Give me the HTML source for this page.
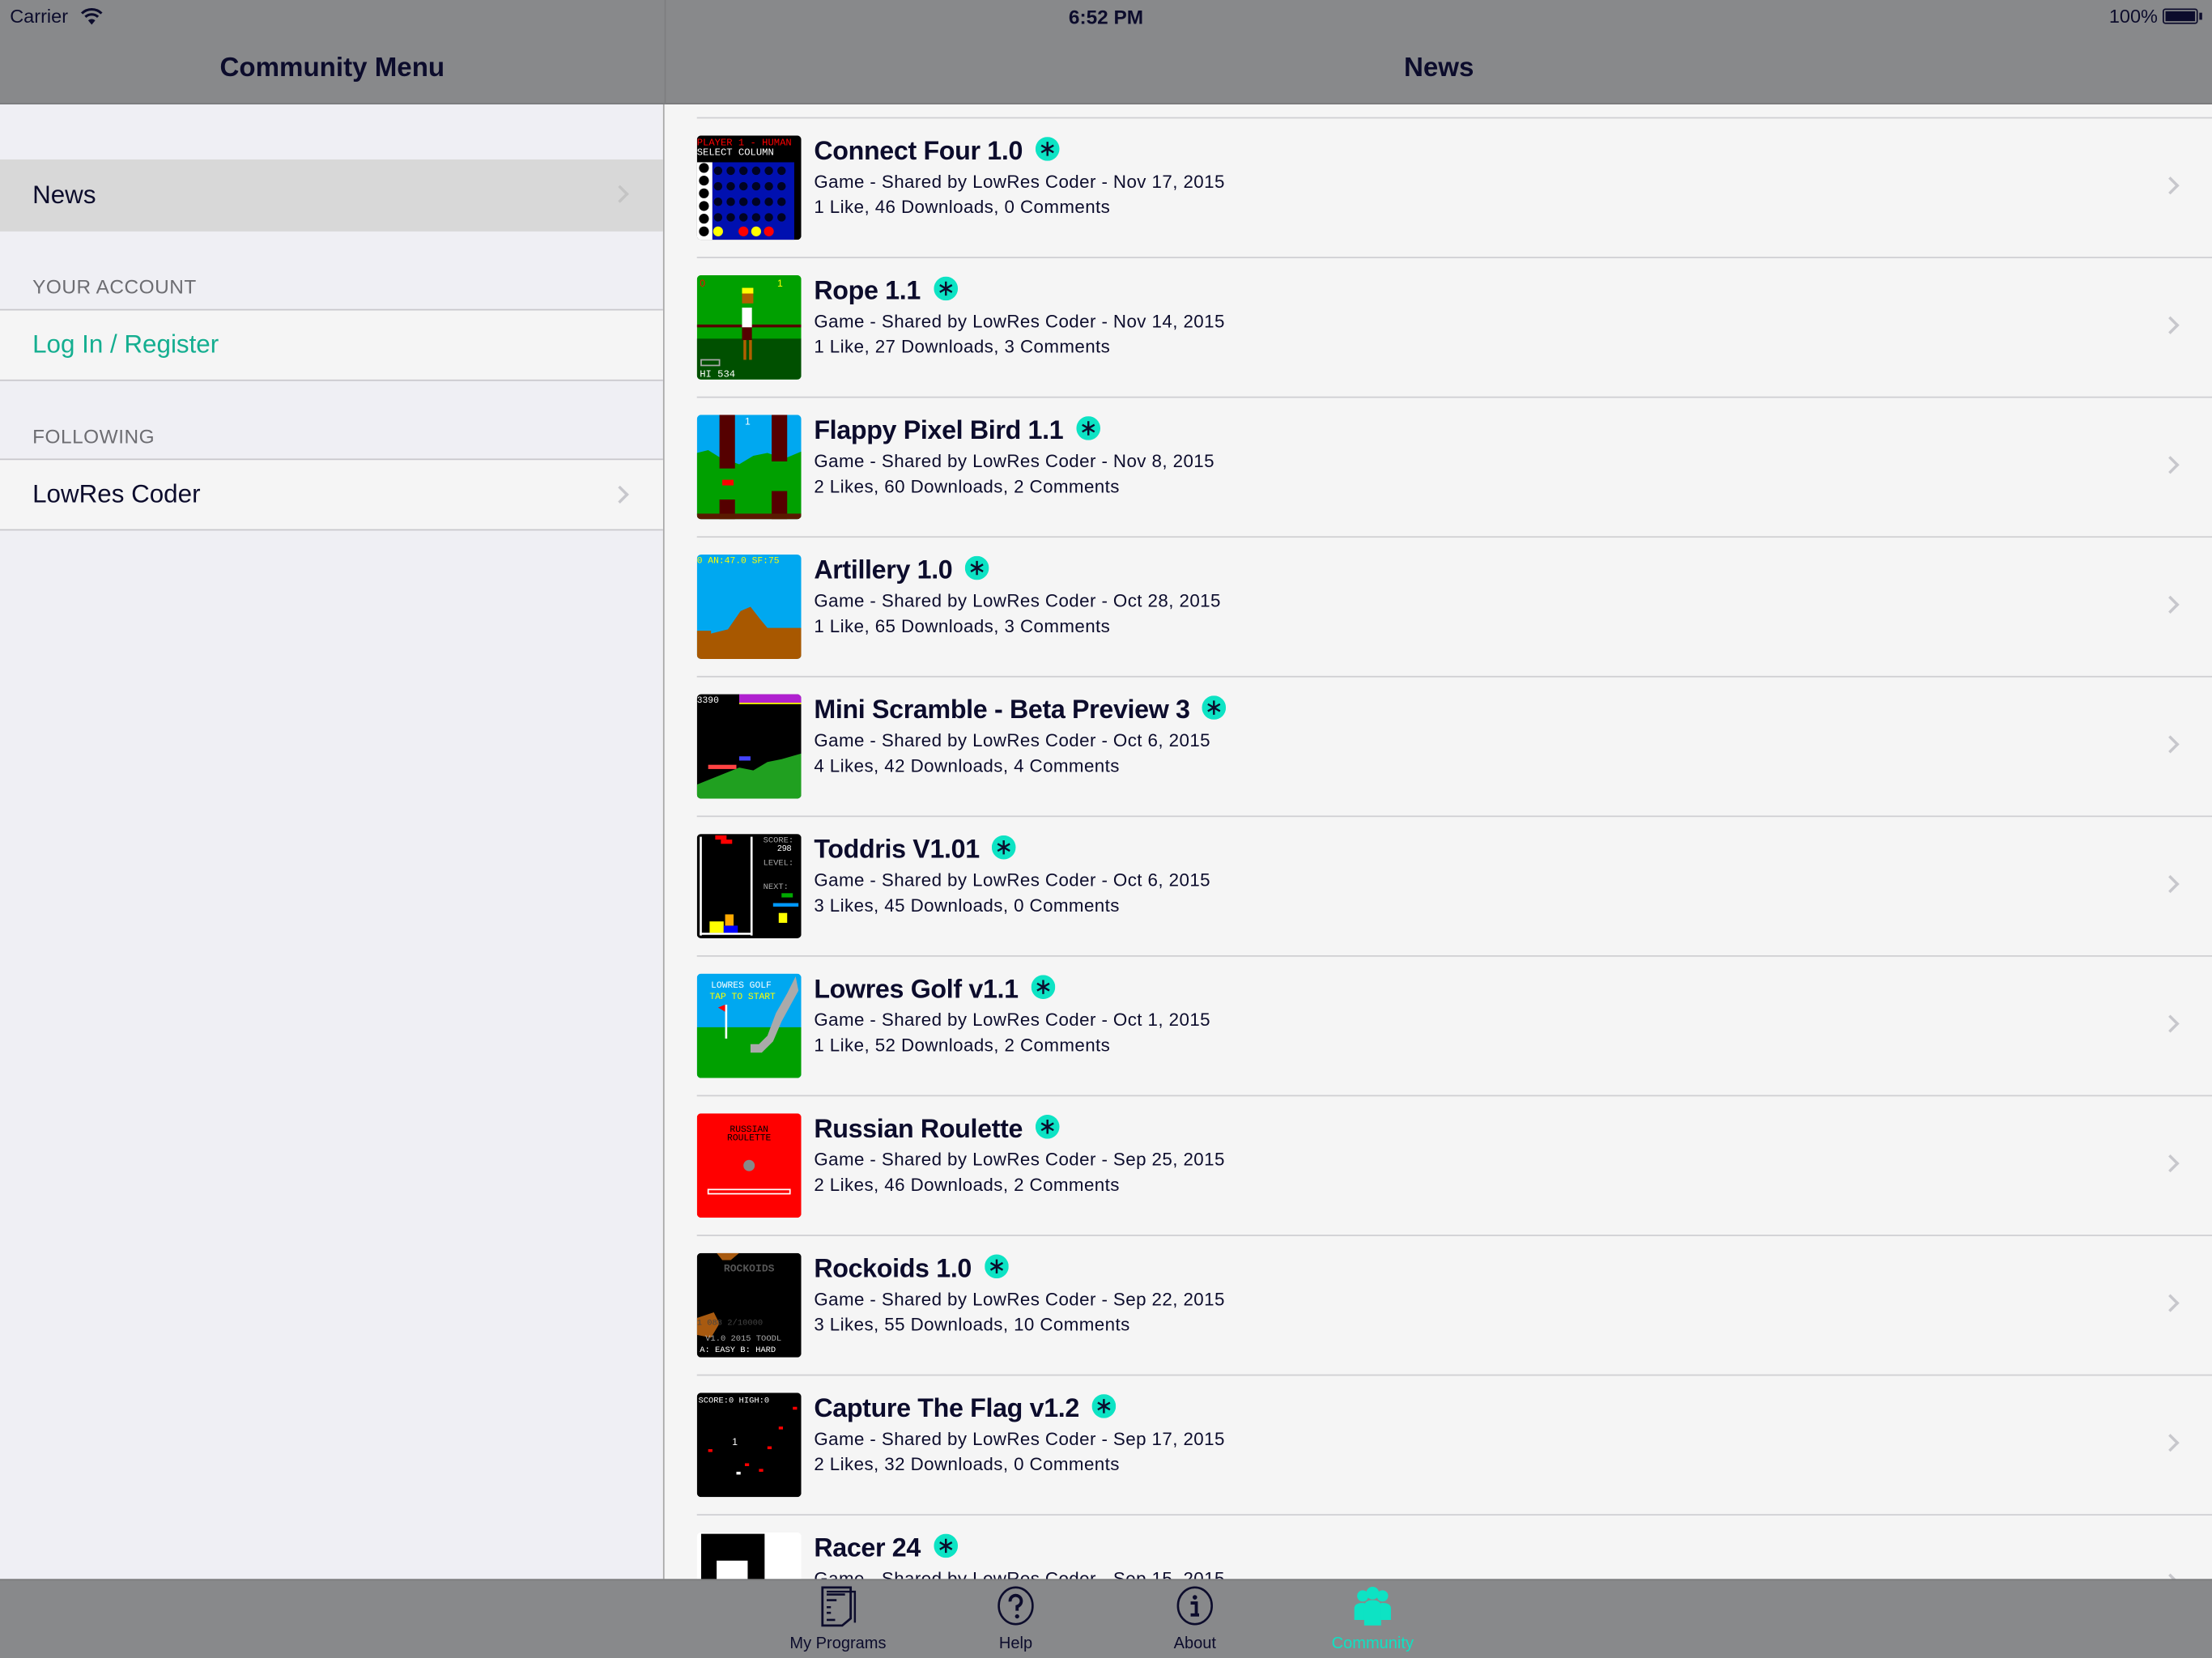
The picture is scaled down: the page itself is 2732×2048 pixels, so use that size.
<!DOCTYPE html>
<html><head><meta charset="utf-8">
<style>
*{margin:0;padding:0;box-sizing:border-box}
html,body{width:2732px;height:2048px;overflow:hidden;background:#f5f5f5}
#w{position:absolute;left:0;top:0;width:1568px;height:1175px;transform:scale(1.74235,1.74298);transform-origin:0 0;font-family:"Liberation Sans",sans-serif;color:#0c0c2c;background:#f5f5f5;overflow:hidden}
.abs{position:absolute}
.nav{left:0;top:0;width:1568px;height:74px;background:#88898b;border-bottom:1px solid #78797b}
.left{left:0;top:74px;width:471px;height:1045px;background:#efeff4;border-right:1px solid #a8a8a8}
.cell{position:absolute;left:0;width:470px;background:#f5f5f5;border-top:1px solid #c8c7cc;border-bottom:1px solid #c8c7cc;font-size:18px}
.chev{position:absolute;width:9px;height:9px;border-right:2px solid #c7c7cc;border-top:2px solid #c7c7cc;transform:rotate(45deg)}
.hdr{position:absolute;left:23px;font-size:14px;color:#6d6d72;letter-spacing:.3px}
.row{position:absolute;left:471px;width:1097px;height:99px}
.sep{position:absolute;left:23px;right:0;top:0;height:1px;background:#cfcfd2}
.th{position:absolute;left:23px;top:13px;width:74px;height:74px;border-radius:3px;overflow:hidden}
.th svg{width:74px;height:74px;display:block}
.t{position:absolute;left:106px;top:13px;font-size:18.5px;font-weight:bold;white-space:nowrap;letter-spacing:-.2px}
.b{display:inline-block;width:17px;height:17px;vertical-align:-1px;margin-left:9px}
.s{position:absolute;left:106px;font-size:12.8px;white-space:nowrap;letter-spacing:.25px}
.tab{left:0;top:1119px;width:1568px;height:56px;background:#88898b;border-top:1px solid #7a7b7d}
.ti{position:absolute;top:1159px;font-size:11.5px;text-align:center;width:120px}
</style></head><body><div id="w">
<svg width="0" height="0" style="position:absolute"><defs><symbol id="ast" viewBox="0 0 17 17"><circle cx="8.5" cy="8.5" r="8.5" fill="#0de3c4"/><path d="M8.5 3.5V13.5M4.2 6L12.8 11M4.2 11L12.8 6" stroke="#0c0c2c" stroke-width="1.4"/></symbol></defs></svg>
<div class="abs nav"></div>
<div class="abs" style="left:471px;top:0;width:1px;height:74px;background:#7d7e80"></div>
<div class="abs" style="left:7px;top:4px;font-size:13.5px">Carrier</div>
<svg class="abs" style="left:57px;top:5px" width="16" height="13" viewBox="0 0 16 13"><path d="M1 4.5A10 10 0 0 1 15 4.5" stroke="#0c0c2c" stroke-width="1.8" fill="none"/><path d="M3.5 7A6.5 6.5 0 0 1 12.5 7" stroke="#0c0c2c" stroke-width="1.8" fill="none"/><path d="M5.5 9.5L8 12.5L10.5 9.5A3.5 3.5 0 0 0 5.5 9.5Z" fill="#0c0c2c"/></svg>
<div class="abs" style="left:0;width:1568px;top:4px;text-align:center;font-size:14px;font-weight:bold">6:52 PM</div>
<div class="abs" style="left:1495px;top:4px;font-size:13.5px">100%</div>
<div class="abs" style="left:1533px;top:6px;width:25px;height:11px;border:1px solid #0c0c2c;border-radius:2px;padding:1px"><div style="width:100%;height:100%;background:#0c0c2c"></div></div>
<div class="abs" style="left:1559px;top:9px;width:2px;height:5px;background:#0c0c2c"></div>
<div class="abs" style="left:0;width:471px;top:38px;text-align:center;font-size:19px;font-weight:bold">Community Menu</div>
<div class="abs" style="left:472px;width:1096px;top:38px;text-align:center;font-size:19px;font-weight:bold">News</div>

<div class="abs left"></div>
<div class="cell" style="top:113px;height:51px;background:#d8d8d8;border:none"><span class="abs" style="left:23px;top:15px">News</span><div class="chev" style="left:435px;top:20px;border-color:#c4c4c4"></div></div>
<div class="hdr" style="top:195px">YOUR ACCOUNT</div>
<div class="cell" style="top:219px;height:51px"><span class="abs" style="left:23px;top:14px;color:#14ae90">Log In / Register</span></div>
<div class="hdr" style="top:301px">FOLLOWING</div>
<div class="cell" style="top:325px;height:51px"><span class="abs" style="left:23px;top:14px">LowRes Coder</span><div class="chev" style="left:435px;top:20px"></div></div>

<div class="row" style="top:83px"><div class="sep"></div>
<div class="th"><svg viewBox="0 0 74 74"><rect width="74" height="74" fill="#000"/><text x="0" y="7" font-size="7" fill="#f00" font-family="Liberation Mono">PLAYER 1 - HUMAN</text><text x="0" y="14" font-size="7" fill="#fff" font-family="Liberation Mono">SELECT COLUMN</text><rect x="0" y="19" width="11" height="55" fill="#fff"/><rect x="11" y="19" width="58" height="55" fill="#0010b0"/><g fill="#000"><circle cx="5" cy="23" r="3.5"/><circle cx="5" cy="32" r="3.5"/><circle cx="5" cy="41" r="3.5"/><circle cx="5" cy="50" r="3.5"/><circle cx="5" cy="59" r="3.5"/><circle cx="5" cy="68" r="3.5"/></g><g fill="#000" opacity=".8"><circle cx="15" cy="25" r="3"/><circle cx="24" cy="25" r="3"/><circle cx="33" cy="25" r="3"/><circle cx="42" cy="25" r="3"/><circle cx="51" cy="25" r="3"/><circle cx="60" cy="25" r="3"/><circle cx="15" cy="36" r="3"/><circle cx="24" cy="36" r="3"/><circle cx="33" cy="36" r="3"/><circle cx="42" cy="36" r="3"/><circle cx="51" cy="36" r="3"/><circle cx="60" cy="36" r="3"/><circle cx="15" cy="47" r="3"/><circle cx="24" cy="47" r="3"/><circle cx="33" cy="47" r="3"/><circle cx="42" cy="47" r="3"/><circle cx="51" cy="47" r="3"/><circle cx="60" cy="47" r="3"/><circle cx="15" cy="58" r="3"/><circle cx="24" cy="58" r="3"/><circle cx="33" cy="58" r="3"/><circle cx="42" cy="58" r="3"/><circle cx="51" cy="58" r="3"/><circle cx="60" cy="58" r="3"/></g><circle cx="15" cy="68" r="3.5" fill="#ff0"/><circle cx="33" cy="68" r="3.5" fill="#f00"/><circle cx="42" cy="68" r="3.5" fill="#ff0"/><circle cx="51" cy="68" r="3.5" fill="#f00"/></svg></div>
<div class="t">Connect Four 1.0<svg class="b"><use href="#ast"/></svg></div><div class="s" style="top:38px">Game - Shared by LowRes Coder - Nov 17, 2015</div><div class="s" style="top:56px">1 Like, 46 Downloads, 0 Comments</div><div class="chev" style="left:1063px;top:44px"></div></div>

<div class="row" style="top:182px"><div class="sep"></div>
<div class="th"><svg viewBox="0 0 74 74"><rect width="74" height="74" fill="#00a000"/><rect y="45" width="74" height="29" fill="#005000"/><rect y="35" width="74" height="2" fill="#500"/><rect x="32" y="12" width="8" height="8" fill="#b06000"/><rect x="32" y="9" width="8" height="4" fill="#ff0"/><rect x="32" y="23" width="7" height="14" fill="#fff"/><rect x="32" y="37" width="7" height="9" fill="#500"/><rect x="33" y="46" width="2" height="14" fill="#b06000"/><rect x="37" y="46" width="2" height="14" fill="#b06000"/><text x="2" y="8" font-size="7" fill="#f00">0</text><text x="57" y="8" font-size="7" fill="#ff0">1</text><rect x="3" y="60" width="13" height="4" fill="none" stroke="#aaa"/><text x="2" y="72" font-size="7" fill="#fff" font-family="Liberation Mono">HI 534</text></svg></div>
<div class="t">Rope 1.1<svg class="b"><use href="#ast"/></svg></div><div class="s" style="top:38px">Game - Shared by LowRes Coder - Nov 14, 2015</div><div class="s" style="top:56px">1 Like, 27 Downloads, 3 Comments</div><div class="chev" style="left:1063px;top:44px"></div></div>

<div class="row" style="top:281px"><div class="sep"></div>
<div class="th"><svg viewBox="0 0 74 74"><rect width="74" height="74" fill="#00a8f0"/><path d="M0 27L8 25L16 30L30 35L40 29L50 27L62 31L74 26V74H0Z" fill="#00a000"/><rect x="16" y="0" width="11" height="38" fill="#500"/><rect x="16" y="60" width="11" height="14" fill="#500"/><rect x="53" y="0" width="11" height="33" fill="#500"/><rect x="53" y="54" width="11" height="20" fill="#500"/><rect y="70" width="74" height="4" fill="#5a1a00"/><rect x="18" y="46" width="8" height="4" fill="#f00"/><text x="34" y="7" font-size="7" fill="#fff">1</text></svg></div>
<div class="t">Flappy Pixel Bird 1.1<svg class="b"><use href="#ast"/></svg></div><div class="s" style="top:38px">Game - Shared by LowRes Coder - Nov 8, 2015</div><div class="s" style="top:56px">2 Likes, 60 Downloads, 2 Comments</div><div class="chev" style="left:1063px;top:44px"></div></div>

<div class="row" style="top:380px"><div class="sep"></div>
<div class="th"><svg viewBox="0 0 74 74"><rect width="74" height="74" fill="#00a8f0"/><path d="M0 54L10 54L10 56L22 53L31 40L38 37L45 46L50 52L74 52V74H0Z" fill="#a85800"/><text x="0" y="6" font-size="6.5" fill="#ff0" font-family="Liberation Mono">0 AN:47.0 SF:75</text></svg></div>
<div class="t">Artillery 1.0<svg class="b"><use href="#ast"/></svg></div><div class="s" style="top:38px">Game - Shared by LowRes Coder - Oct 28, 2015</div><div class="s" style="top:56px">1 Like, 65 Downloads, 3 Comments</div><div class="chev" style="left:1063px;top:44px"></div></div>

<div class="row" style="top:479px"><div class="sep"></div>
<div class="th"><svg viewBox="0 0 74 74"><rect width="74" height="74" fill="#000"/><path d="M0 64L10 60L20 56L30 52L40 54L50 48L60 46L74 42V74H0Z" fill="#20a020"/><rect x="30" y="0" width="44" height="6" fill="#b020d0"/><rect x="30" y="6" width="44" height="1" fill="#ff0"/><text x="0" y="6" font-size="6.5" fill="#fff" font-family="Liberation Mono">3390</text><rect x="8" y="50" width="20" height="3" fill="#f44"/><rect x="30" y="44" width="8" height="3" fill="#44f"/></svg></div>
<div class="t">Mini Scramble - Beta Preview 3<svg class="b"><use href="#ast"/></svg></div><div class="s" style="top:38px">Game - Shared by LowRes Coder - Oct 6, 2015</div><div class="s" style="top:56px">4 Likes, 42 Downloads, 4 Comments</div><div class="chev" style="left:1063px;top:44px"></div></div>

<div class="row" style="top:578px"><div class="sep"></div>
<div class="th"><svg viewBox="0 0 74 74"><rect width="74" height="74" fill="#000"/><rect x="2" y="2" width="1.5" height="70" fill="#fff"/><rect x="38" y="2" width="1.5" height="70" fill="#fff"/><rect x="2" y="70" width="37" height="1.5" fill="#fff"/><rect x="13" y="1" width="8" height="3" fill="#f00"/><rect x="17" y="4" width="8" height="3" fill="#f00"/><rect x="9" y="62" width="10" height="8" fill="#ff0"/><rect x="19" y="65" width="10" height="5" fill="#00f"/><rect x="20" y="57" width="6" height="8" fill="#fa0"/><text x="47" y="6" font-size="6" fill="#aaa" font-family="Liberation Mono">SCORE:</text><text x="57" y="12" font-size="6" fill="#fff">298</text><text x="47" y="22" font-size="6" fill="#aaa" font-family="Liberation Mono">LEVEL:</text><text x="47" y="39" font-size="6" fill="#aaa" font-family="Liberation Mono">NEXT:</text><rect x="60" y="42" width="8" height="3" fill="#0a0"/><rect x="54" y="49" width="18" height="2.5" fill="#09f"/><rect x="58" y="56" width="6" height="7" fill="#ff0"/></svg></div>
<div class="t">Toddris V1.01<svg class="b"><use href="#ast"/></svg></div><div class="s" style="top:38px">Game - Shared by LowRes Coder - Oct 6, 2015</div><div class="s" style="top:56px">3 Likes, 45 Downloads, 0 Comments</div><div class="chev" style="left:1063px;top:44px"></div></div>

<div class="row" style="top:677px"><div class="sep"></div>
<div class="th"><svg viewBox="0 0 74 74"><rect width="74" height="74" fill="#00a8f0"/><rect y="38" width="74" height="36" fill="#00a000"/><text x="10" y="10" font-size="6.5" fill="#fff" font-family="Liberation Mono">LOWRES GOLF</text><text x="9" y="18" font-size="6.5" fill="#ff0" font-family="Liberation Mono">TAP TO START</text><rect x="20" y="22" width="1.5" height="24" fill="#fff"/><path d="M15 24L20 22L20 27Z" fill="#f00"/><path d="M70 2L64 14L56 28L50 44L44 50L38 50L38 56L46 56L54 48L60 34L72 12Z" fill="#aaa"/></svg></div>
<div class="t">Lowres Golf v1.1<svg class="b"><use href="#ast"/></svg></div><div class="s" style="top:38px">Game - Shared by LowRes Coder - Oct 1, 2015</div><div class="s" style="top:56px">1 Like, 52 Downloads, 2 Comments</div><div class="chev" style="left:1063px;top:44px"></div></div>

<div class="row" style="top:776px"><div class="sep"></div>
<div class="th"><svg viewBox="0 0 74 74"><rect width="74" height="74" fill="#f00"/><text x="37" y="13" font-size="6.5" fill="#000" text-anchor="middle" font-family="Liberation Mono">RUSSIAN</text><text x="37" y="19" font-size="6.5" fill="#000" text-anchor="middle" font-family="Liberation Mono">ROULETTE</text><circle cx="37" cy="37" r="4" fill="#888"/><rect x="8" y="54" width="58" height="3" fill="none" stroke="#fff" stroke-width="1"/></svg></div>
<div class="t">Russian Roulette<svg class="b"><use href="#ast"/></svg></div><div class="s" style="top:38px">Game - Shared by LowRes Coder - Sep 25, 2015</div><div class="s" style="top:56px">2 Likes, 46 Downloads, 2 Comments</div><div class="chev" style="left:1063px;top:44px"></div></div>

<div class="row" style="top:875px"><div class="sep"></div>
<div class="th"><svg viewBox="0 0 74 74"><rect width="74" height="74" fill="#000"/><path d="M14 0H30L24 5H18Z" fill="#a85a10"/><text x="37" y="13" font-size="7.5" fill="#555" text-anchor="middle" font-weight="bold" font-family="Liberation Mono">ROCKOIDS</text><path d="M0 46L12 42L16 50L10 60L0 58Z" fill="#a85a10"/><text x="0" y="51" font-size="6" fill="#444" font-family="Liberation Mono">1 088    2/10000</text><text x="6" y="62" font-size="6" fill="#aaa" font-family="Liberation Mono">V1.0 2015 TOODL</text><text x="2" y="70" font-size="6" fill="#fff" font-family="Liberation Mono">A: EASY  B: HARD</text></svg></div>
<div class="t">Rockoids 1.0<svg class="b"><use href="#ast"/></svg></div><div class="s" style="top:38px">Game - Shared by LowRes Coder - Sep 22, 2015</div><div class="s" style="top:56px">3 Likes, 55 Downloads, 10 Comments</div><div class="chev" style="left:1063px;top:44px"></div></div>

<div class="row" style="top:974px"><div class="sep"></div>
<div class="th"><svg viewBox="0 0 74 74"><rect width="74" height="74" fill="#000"/><text x="1" y="7" font-size="6" fill="#fff" font-family="Liberation Mono">SCORE:0  HIGH:0</text><rect x="68" y="10" width="3" height="2" fill="#f00"/><text x="25" y="37" font-size="7" fill="#fff">1</text><rect x="8" y="40" width="3" height="2" fill="#f00"/><rect x="50" y="38" width="3" height="2" fill="#f00"/><rect x="34" y="50" width="3" height="2" fill="#f00"/><rect x="44" y="54" width="3" height="2" fill="#f00"/><rect x="58" y="24" width="3" height="2" fill="#f00"/><rect x="28" y="56" width="3" height="2" fill="#fff"/></svg></div>
<div class="t">Capture The Flag v1.2<svg class="b"><use href="#ast"/></svg></div><div class="s" style="top:38px">Game - Shared by LowRes Coder - Sep 17, 2015</div><div class="s" style="top:56px">2 Likes, 32 Downloads, 0 Comments</div><div class="chev" style="left:1063px;top:44px"></div></div>

<div class="row" style="top:1073px"><div class="sep"></div>
<div class="th"><svg viewBox="0 0 74 74"><rect width="74" height="74" fill="#fff"/><rect x="3" y="1" width="68" height="73" fill="#000"/><rect x="14" y="20" width="22" height="54" fill="#fff"/><rect x="48" y="0" width="26" height="34" fill="#fff"/></svg></div>
<div class="t">Racer 24<svg class="b"><use href="#ast"/></svg></div><div class="s" style="top:38px">Game - Shared by LowRes Coder - Sep 15, 2015</div><div class="chev" style="left:1063px;top:44px"></div></div>

<div class="abs tab"></div>
<svg class="abs" style="left:581px;top:1124px" width="27" height="29" viewBox="0 0 27 29"><path d="M2 1H22V23L16 28H2Z" fill="none" stroke="#0c0c2c" stroke-width="1.6"/><path d="M5 4H25V26" fill="none" stroke="#0c0c2c" stroke-width="1.4"/><path d="M5 6H18M5 10H12M5 15H8M5 19H8M5 24H11" stroke="#0c0c2c" stroke-width="1.5"/></svg>
<svg class="abs" style="left:706px;top:1124px" width="28" height="28" viewBox="0 0 28 28"><ellipse cx="14" cy="14" rx="12" ry="13" fill="none" stroke="#0c0c2c" stroke-width="1.5"/><path d="M10 11A4 4 0 1 1 15 14.5V17.5" fill="none" stroke="#0c0c2c" stroke-width="2.2"/><circle cx="15" cy="21.5" r="1.5" fill="#0c0c2c"/></svg>
<svg class="abs" style="left:833px;top:1124px" width="28" height="28" viewBox="0 0 28 28"><ellipse cx="14" cy="14" rx="12" ry="13" fill="none" stroke="#0c0c2c" stroke-width="1.5"/><circle cx="14" cy="8" r="1.6" fill="#0c0c2c"/><path d="M11 12H15V20M11 20.5H17" fill="none" stroke="#0c0c2c" stroke-width="2.2"/></svg>
<svg class="abs" style="left:959px;top:1124px" width="28" height="28" viewBox="0 0 28 28"><g fill="#0de3c4"><circle cx="7" cy="7" r="4"/><circle cx="21" cy="7" r="4"/><path d="M1 24V16Q1 12 7 12Q10 12 10 16V24Z"/><path d="M18 24V16Q18 12 21 12Q27 12 27 16V24Z"/><circle cx="14" cy="5" r="4.5"/><path d="M8 28V15Q8 10 14 10Q20 10 20 15V28Z"/></g></svg>
<div class="ti" style="left:534px">My Programs</div>
<div class="ti" style="left:660px">Help</div>
<div class="ti" style="left:787px">About</div>
<div class="ti" style="left:913px;color:#0de3c4">Community</div>
</div></body></html>
